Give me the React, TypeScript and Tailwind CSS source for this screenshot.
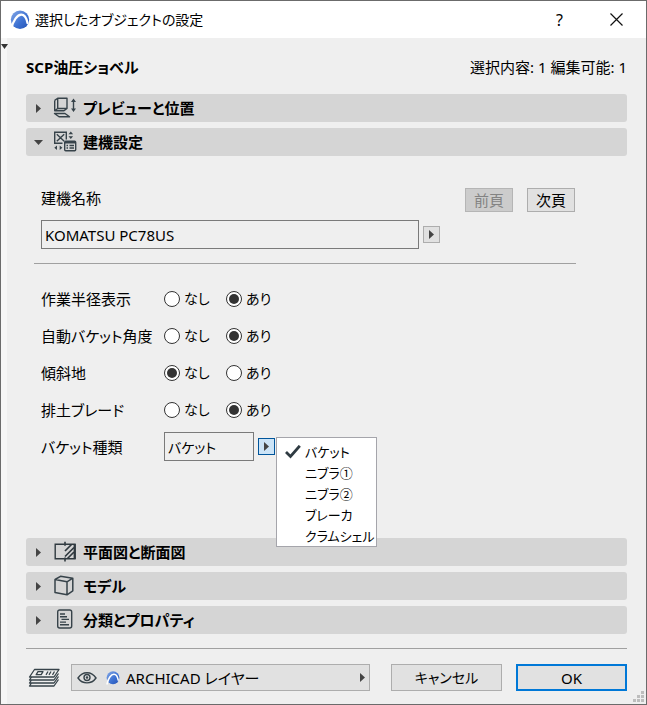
import { useState } from "react";
import type { ReactNode } from "react";

const radioRows = [
  { id: "radius", label: "作業半径表示", value: "あり" },
  { id: "angle", label: "自動バケット角度", value: "あり" },
  { id: "slope", label: "傾斜地", value: "なし" },
  { id: "blade", label: "排土ブレード", value: "あり" },
];

const bucketTypes = ["バケット", "ニブラ①", "ニブラ②", "ブレーカ", "クラムシェル"];

function Arrow({ down = false }: { down?: boolean }) {
  return (
    <svg viewBox="0 0 9 9" className="size-[9px] shrink-0" fill="#444">
      {down ? <path d="M0 2h9L4.5 7z" /> : <path d="M2 0v9l5-4.5z" />}
    </svg>
  );
}

function ArchicadLogo({ className, id }: { className: string; id: string }) {
  return (
    <svg viewBox="0 0 20 20" className={className}>
      <defs>
        <linearGradient id={id} x1="0" y1="0" x2="1" y2="1">
          <stop offset="0" stopColor="#86a9e6" />
          <stop offset="0.55" stopColor="#3f73d3" />
          <stop offset="1" stopColor="#2452b4" />
        </linearGradient>
      </defs>
      <circle cx="10" cy="9.7" r="9.2" fill={`url(#${id})`} />
      <path
        d="M1.5 18.500C3 10.600 7.300 4.600 11.300 4.600c3.300 0 5.200 3.400 6.200 8.400"
        fill="none"
        stroke="#fff"
        strokeWidth="2.2"
        strokeLinecap="round"
      />
    </svg>
  );
}

function PreviewIcon() {
  return (
    <svg viewBox="0 0 24 22" className="h-[22px] w-6" fill="none" stroke="#37434a" strokeWidth="1.4">
      <path
        d="M4.700 1.200h9.300v10.300H4.700zM1.700 3.400l3-2.200M1.700 3.400v10.300l3-2.200M1.700 13.700h9.300l3-2.200M1.500 16.500h10.500l4.500 3.300H6z"
        strokeLinejoin="round"
      />
      <path d="M20.500 3.500v9" />
      <path d="M18 5l2.500-3.500L23 5zM18 11.500l2.500 3.500 2.500-3.500z" fill="#37434a" stroke="none" />
    </svg>
  );
}

function SettingsIcon() {
  return (
    <svg viewBox="0 0 24 22" className="h-[22px] w-6" fill="none" stroke="#37434a" strokeWidth="1.4">
      <path d="M9.500 12.300H1.700V1.200h11.600v7.300M3.800 3.300l7.400 7M11.200 3.300l-7.400 7" />
      <path
        d="M15.500 3.300L17.800 0.600l2.300 2.700zM15.500 5.300h4.600L17.800 8zM4 14.500v4.600L1.300 16.800zM6.700 14.500l2.700 2.300-2.700 2.300z"
        fill="#37434a"
        stroke="none"
      />
      <rect x="11.700" y="10.200" width="11" height="9.500" rx="1" />
      <path d="M12 11.500h10.500" strokeWidth="2" />
      <path d="M13.500 14.500h1.500M16.500 14.500h4.500M13.500 17h1.500M16.500 17h4.500" />
    </svg>
  );
}

function PlanIcon() {
  return (
    <svg viewBox="0 0 24 22" className="h-[22px] w-6" fill="none" stroke="#303a40" strokeWidth="1.4">
      <path d="M11.500 3.200H2.200v14.600h9.300" />
      <path d="M12 0.800v4M12 16.500v4" strokeWidth="1.600" />
      <path d="M11.500 3.200H22v14.600H11.500" />
      <path d="M21.700 3v15" strokeWidth="2.200" />
      <path d="M12 10l6.500-6.500M12 15.500l9-9M14.500 17.500l6.500-6.500" strokeWidth="1.700" />
    </svg>
  );
}

function ModelIcon() {
  return (
    <svg
      viewBox="0 0 24 22"
      className="h-[22px] w-6"
      fill="none"
      stroke="#37434a"
      strokeWidth="1.5"
      strokeLinejoin="round"
    >
      <path d="M2 4.500l12 2.300v13l-12-2.300zM2 4.500L7.500 1.300l12.300 1.900L14 6.800M19.800 3.200v12.600L14 19.800" />
    </svg>
  );
}

function ClassificationIcon() {
  return (
    <svg viewBox="0 0 24 22" className="h-[22px] w-6" fill="none" stroke="#37434a" strokeWidth="1.4">
      <rect x="4.700" y="1" width="14" height="18" rx="2" />
      <path d="M7 5h5M7 7.700h7M8.500 10.400h7.500M7 13.100h6M7 15.800h9" />
    </svg>
  );
}

function LayersIcon() {
  return (
    <svg
      viewBox="0 0 32 20"
      className="h-5 w-8 shrink-0"
      fill="none"
      stroke="#37434a"
      strokeWidth="1.3"
      strokeLinejoin="round"
    >
      <path d="M6.500 1.500H31l-5 7.500H1.500z" />
      <path d="M3.500 9L1.500 12H26l4.500-6.500M3.500 12l-2 3H26l4.500-6.500M3.500 15l-2 3H26l4.500-6.500" />
      <path d="M10 3.700h5L13.200 6.700h-5zM20 3.500l-2 3.300M23 3.500l-2 3.300M26.500 3.500l-2 3.300" />
    </svg>
  );
}

function EyeIcon() {
  return (
    <svg viewBox="0 0 20 14" className="h-[14px] w-5 shrink-0" fill="none" stroke="#37434a" strokeWidth="1.4">
      <path d="M1 7c4.500-7 13.500-7 18 0-4.500 6.500-13.500 6.500-18 0z" />
      <circle cx="10" cy="6.500" r="3" />
      <circle cx="10" cy="6.500" r="0.600" />
    </svg>
  );
}

function SectionBar({ icon, title, open = false }: { icon: ReactNode; title: string; open?: boolean }) {
  return (
    <button
      type="button"
      aria-expanded={open}
      className="flex h-7 w-full items-center rounded-[3px] bg-[#d5d5d5] pl-2 text-left font-bold"
    >
      <Arrow down={open} />
      <span className="ml-[10px] mr-[6px]">{icon}</span>
      {title}
    </button>
  );
}

function App() {
  const [values, setValues] = useState<Record<string, string>>(
    Object.fromEntries(radioRows.map((row) => [row.id, row.value])),
  );
  const [bucket, setBucket] = useState("バケット");
  const [isMenuOpen, setIsMenuOpen] = useState(true);

  return (
    <div className="relative flex min-h-screen flex-col border border-[#6b6b6b] bg-[#efefef] font-['Noto_Sans','Noto_Sans_CJK_JP',sans-serif] text-[15px] leading-5 text-black [font-feature-settings:'palt']">
      <header className="flex h-[37px] items-center bg-white pl-[9px]">
        <ArchicadLogo id="logo-title" className="size-5" />
        <h1 className="ml-[5px] flex-1 text-[14px]">選択したオブジェクトの設定</h1>
        <button type="button" aria-label="ヘルプ" className="h-full w-[57px] text-[16px]">
          ?
        </button>
        <button type="button" aria-label="閉じる" className="mr-px flex h-full w-[57px] items-center justify-center">
          <svg viewBox="0 0 13 13" className="size-[13px]" stroke="#111" strokeWidth="1.2">
            <path d="M0.500 0.500l12 12M12.500 0.500l-12 12" />
          </svg>
        </button>
      </header>

      <svg viewBox="0 0 7 5" className="absolute left-0 top-[43px] h-[5px] w-[7px]" fill="#333">
        <path d="M0 0h7L3.500 5z" />
      </svg>

      <main className="flex flex-1 flex-col border-l-[6px] border-[#f6f6f6] pl-[19px] pr-[19px]">
        <div className="flex h-14 items-center justify-between pt-[2px]">
          <h2 className="font-bold">SCP油圧ショベル</h2>
          <p>選択内容: 1 編集可能: 1</p>
        </div>

        <div className="flex flex-col gap-[6px]">
          <SectionBar icon={<PreviewIcon />} title="プレビューと位置" />
          <SectionBar icon={<SettingsIcon />} title="建機設定" open />
        </div>

        <section className="mr-[51px] pb-[73px] pl-[15px] pt-8">
          <div className="flex h-6 items-start">
            <label htmlFor="machine" className="flex-1">
              建機名称
            </label>
            <button
              type="button"
              disabled
              className="h-6 w-12 border border-[#b5b5b5] bg-[#cccccc] text-[#838383]"
            >
              前頁
            </button>
            <button type="button" className="ml-[14px] mr-px h-6 w-12 border border-[#adadad] bg-[#e1e1e1]">
              次頁
            </button>
          </div>

          <div className="mr-[136px] mt-2 flex items-center gap-1">
            <input
              id="machine"
              readOnly
              value="KOMATSU PC78US"
              className="h-[29px] min-w-0 flex-1 border border-[#7a7a7a] bg-[#efefef] px-[3px]"
            />
            <button
              type="button"
              aria-label="建機を選択"
              className="flex size-[17px] items-center justify-center border border-[#adadad] bg-[#e1e1e1]"
            >
              <Arrow />
            </button>
          </div>

          <hr className="-ml-[7px] mt-[14px] border-[#a0a0a0]" />

          <div className="mt-4">
            {radioRows.map((row) => (
              <fieldset key={row.id} aria-labelledby={row.id} className="flex h-[37px] items-center">
                <span id={row.id} className="w-[123px]">
                  {row.label}
                </span>
                {["なし", "あり"].map((option) => (
                  <label key={option} className="flex w-[62px] items-center gap-1 text-[14px]">
                    <input
                      type="radio"
                      name={row.id}
                      checked={values[row.id] === option}
                      onChange={() => setValues({ ...values, [row.id]: option })}
                      className="flex size-4 shrink-0 appearance-none items-center justify-center rounded-full border border-[#333] bg-white before:size-[10px] before:rounded-full checked:before:bg-[#333] checked:before:content-['']"
                    />
                    {option}
                  </label>
                ))}
              </fieldset>
            ))}

            <div className="flex h-[37px] items-center">
              <label htmlFor="bucket" className="w-[123px]">
                バケット種類
              </label>
              <input
                id="bucket"
                readOnly
                value={bucket}
                className="h-[29px] w-[90px] border border-[#7a7a7a] bg-[#efefef] px-[3px] text-[14px]"
              />
              <div className="relative ml-1">
                <button
                  type="button"
                  aria-label="バケット種類を選択"
                  aria-expanded={isMenuOpen}
                  onClick={() => setIsMenuOpen(!isMenuOpen)}
                  className="flex size-[17px] items-center justify-center border border-[#00559b] bg-[#cce4f7]"
                >
                  <Arrow />
                </button>
                {isMenuOpen && (
                  <div
                    role="menu"
                    className="absolute -top-px left-[18px] z-10 w-[101px] border border-[#a5a5ab] bg-white pt-[3px]"
                  >
                    {bucketTypes.map((type) => (
                      <button
                        key={type}
                        type="button"
                        role="menuitemradio"
                        aria-checked={type === bucket}
                        onClick={() => {
                          setBucket(type);
                          setIsMenuOpen(false);
                        }}
                        className="flex h-[21px] w-full items-center whitespace-nowrap pl-2 text-[13px]"
                      >
                        <span className="w-5 shrink-0">
                          {type === bucket && (
                            <svg
                              viewBox="0 0 16 14"
                              className="h-[14px] w-4"
                              fill="none"
                              stroke="#2f3b42"
                              strokeWidth="2.8"
                            >
                              <path d="M1 7l4.500 4.500L14.800 0.800" />
                            </svg>
                          )}
                        </span>
                        {type}
                      </button>
                    ))}
                  </div>
                )}
              </div>
            </div>
          </div>
        </section>

        <div className="flex flex-col gap-[6px]">
          <SectionBar icon={<PlanIcon />} title="平面図と断面図" />
          <SectionBar icon={<ModelIcon />} title="モデル" />
          <SectionBar icon={<ClassificationIcon />} title="分類とプロパティ" />
        </div>

        <hr className="mt-[14px] border-[#a0a0a0]" />

        <footer className="mt-[15px] flex h-[27px] items-center pl-[2px]">
          <LayersIcon />
          <div className="ml-[11px] flex h-full min-w-0 flex-1 items-center border border-[#adadad] bg-[#e1e1e1] pl-[5px] pr-[2px]">
            <EyeIcon />
            <ArchicadLogo id="logo-layer" className="ml-[9px] size-[14px] shrink-0" />
            <select aria-label="レイヤー" className="ml-[6px] min-w-0 flex-1 appearance-none bg-transparent">
              <option>ARCHICAD レイヤー</option>
            </select>
            <Arrow />
          </div>
          <button
            type="button"
            className="ml-[21px] h-full w-[111px] border border-[#adadad] bg-[#e1e1e1] text-[14px]"
          >
            キャンセル
          </button>
          <button type="button" className="ml-[14px] h-full w-[111px] border-2 border-[#0078d7] bg-[#e1e1e1]">
            OK
          </button>
        </footer>
      </main>

      <svg viewBox="0 0 11 11" className="absolute bottom-[2px] right-[2px] size-[11px]" fill="#bdbdbd">
        <path d="M8 0h3v3H8zM4 4h3v3H4zM8 4h3v3H8zM0 8h3v3H0zM4 8h3v3H4zM8 8h3v3H8z" />
      </svg>
    </div>
  );
}

export default App;
